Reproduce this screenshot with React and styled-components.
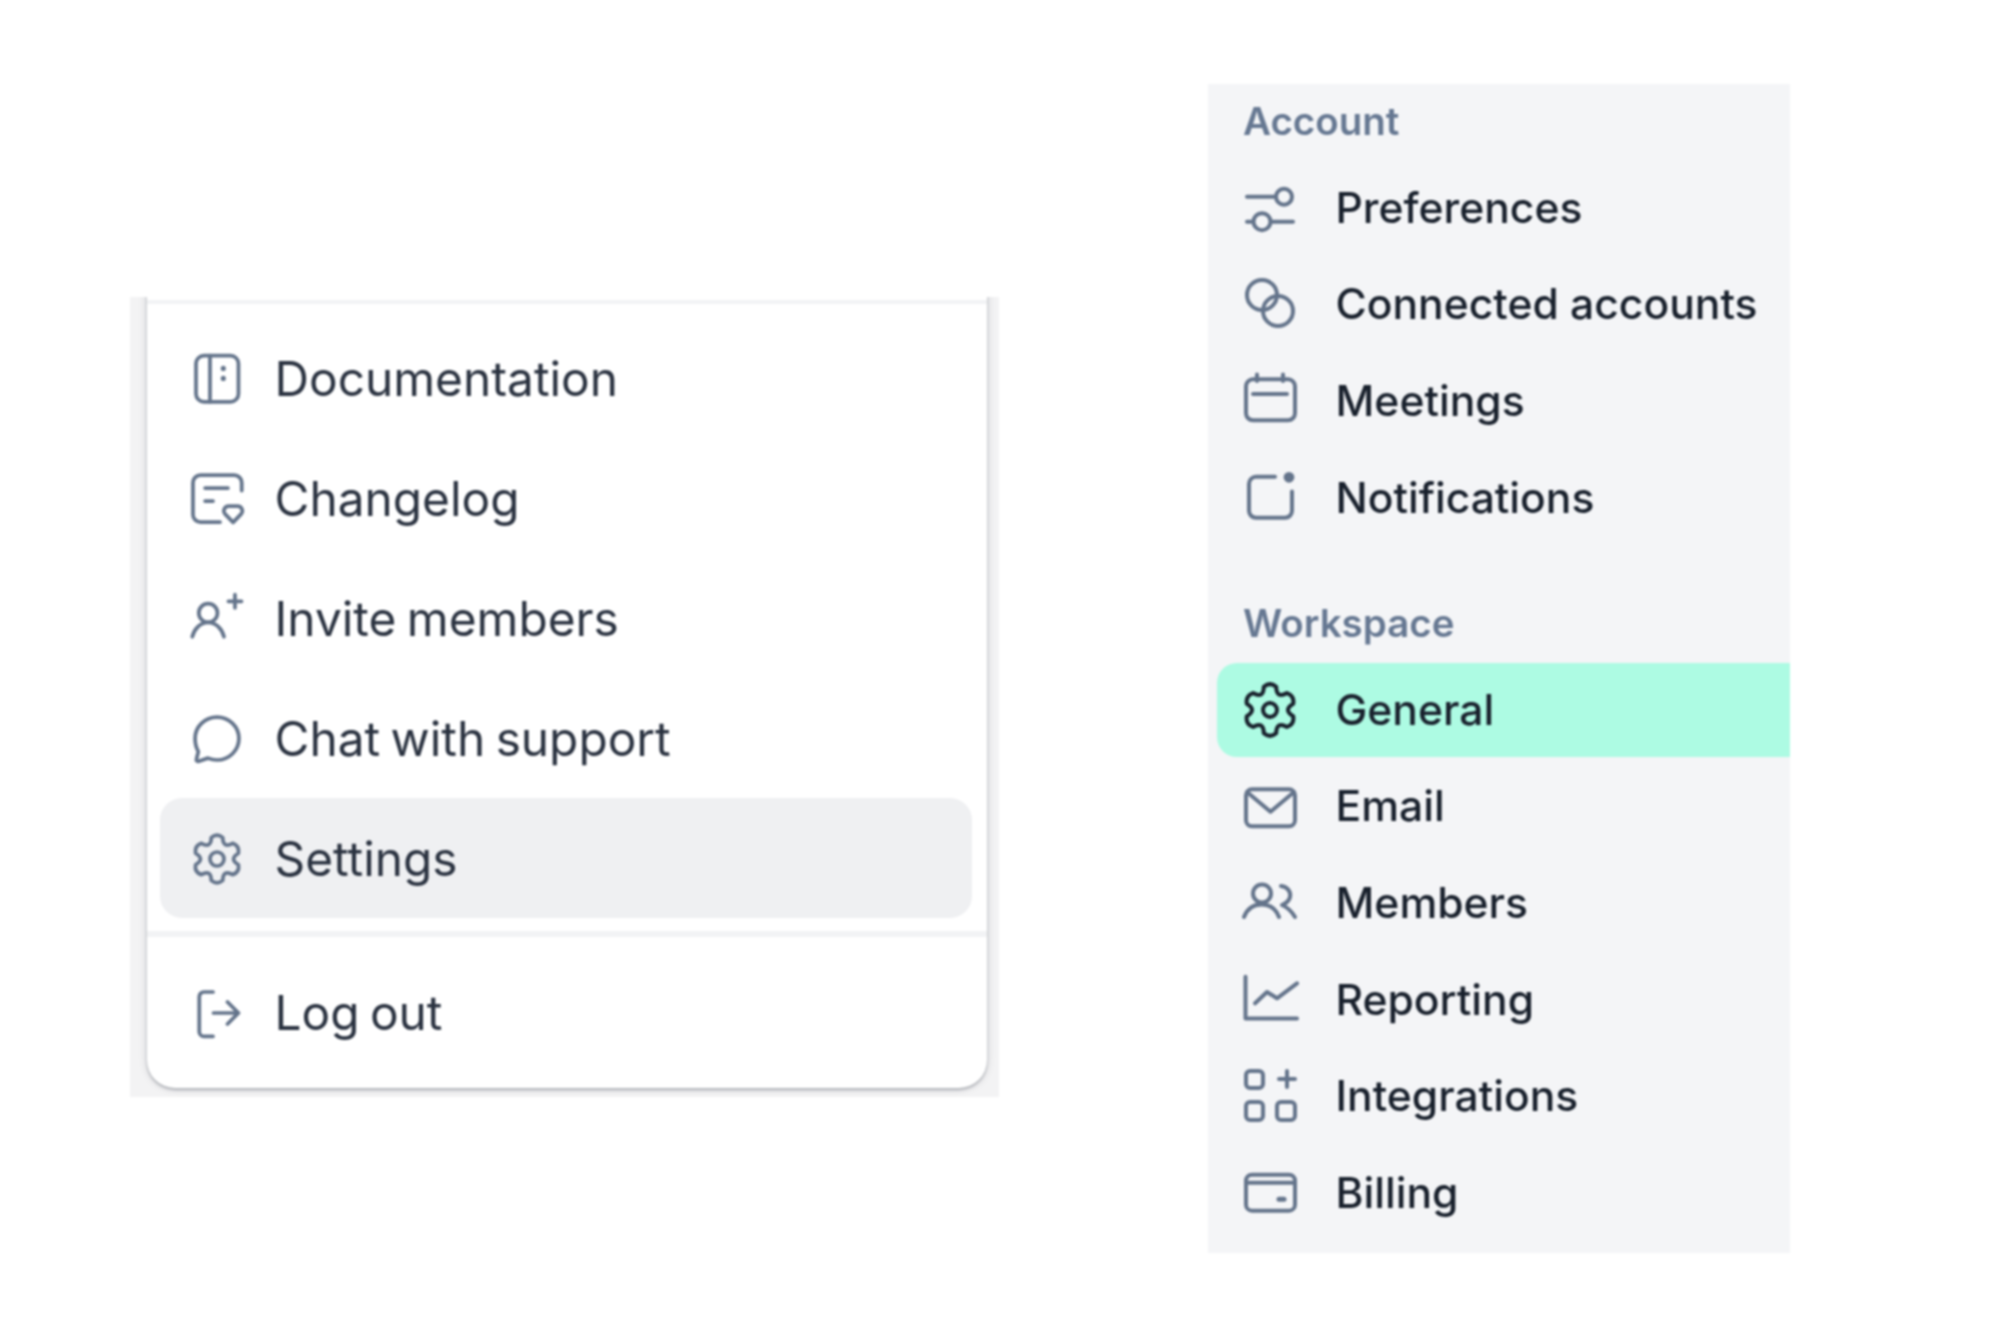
import React from "react";
import styled, { createGlobalStyle } from "styled-components";

const GlobalStyle = createGlobalStyle`
  html, body {
    margin: 0;
    padding: 0;
    background: #ffffff;
  }
`;

// six lobed gear used by both lists, drawn around the middle of its viewBox
const gearPath = (c, radius) => {
  const pt = (r, deg) => {
    const a = (deg * Math.PI) / 180;
    return `${(c + r * Math.cos(a)).toFixed(2)} ${(c + r * Math.sin(a)).toFixed(2)}`;
  };
  const shoulder = radius * 0.98;
  let d = `M${pt(shoulder, -90 - 15)}`;
  for (let k = 0; k < 6; k++) {
    const a = -90 + 60 * k;
    d += ` Q${pt(radius * 1.16, a)} ${pt(shoulder, a + 15)}`;
    d += ` Q${pt(radius * 0.52, a + 30)} ${pt(shoulder, a + 45)}`;
  }
  return d + "Z";
};

// 24 unit icons of the dropdown menu
const menuIcons = {
  book: (
    <>
      <rect x="3" y="2" width="18.2" height="19.8" rx="3.4" />
      <path d="M9 2v19.8" />
      <path d="M14.7 7.4v.1M14.7 11.7v.1" strokeWidth="2.2" />
    </>
  ),
  changelog: (
    <>
      <path d="M22.6 8.400V5a3.200 3.200 0 0 0-3.200-3.200H4.900A3.200 3.200 0 0 0 1.700 5v13.700a3.200 3.200 0 0 0 3.200 3.200h8.400" />
      <path d="M6.900 7.300h9.800M6.900 12.900h3.400" />
      <path d="M18.900 22l-3.400-3.500c-1.200-1.300-.3-3.400 1.500-3.400h3.800c1.800 0 2.700 2.100 1.500 3.400z" />
    </>
  ),
  invite: (
    <>
      <circle cx="8.200" cy="9.400" r="4" />
      <path d="M1.400 19.600c.8-3.400 3.500-6.200 6.800-6.200s6 2.800 6.800 6.200" />
      <path d="M19.700 1.600v5.600M16.900 4.400h5.600" />
    </>
  ),
  chat: (
    <path d="M12 2.600c5.200 0 9.400 4.100 9.400 9.200S17.200 21 12 21c-1.400 0-2.700-.3-3.900-.8l-3.900 1.300c-.6.2-1.200-.3-1-.9l.8-3.200C3.200 16 2.600 14 2.600 11.800 2.600 6.700 6.800 2.600 12 2.600z" />
  ),
  gear: (
    <>
      <path d={gearPath(12, 9.7)} />
      <circle cx="12" cy="12" r="3" />
    </>
  ),
  logout: (
    <>
      <path d="M10.300 3H6.400A2 2 0 0 0 4.400 5V20a2 2 0 0 0 2 2h3.900" />
      <path d="M10.500 12H21.200M16.500 7.300l4.700 4.700-4.700 4.700" />
    </>
  ),
};

// 64 unit icons of the settings sidebar
const navIcons = {
  sliders: (
    <>
      <path d="M9 20.700h28M33 45.700h22M9 45.700h6" />
      <circle cx="46" cy="20.700" r="8" />
      <circle cx="24" cy="45.700" r="8.500" />
    </>
  ),
  connected: (
    <>
      <circle cx="24" cy="22" r="15" />
      <circle cx="40" cy="38" r="15" />
    </>
  ),
  calendar: (
    <>
      <rect x="8" y="10.300" width="49" height="41" rx="7" />
      <path d="M19 5.500V12M45 5.500V12M15 25h34" />
    </>
  ),
  notify: (
    <>
      <path d="M37 10.800H18a7 7 0 0 0-7 7v27a7 7 0 0 0 7 7h29a7 7 0 0 0 7-7V25.400" />
      <circle cx="51" cy="11.300" r="3.400" fill="#64748b" />
    </>
  ),
  gear: (
    <>
      <path d={gearPath(32, 24.500)} />
      <circle cx="32" cy="32" r="7" />
    </>
  ),
  mail: (
    <>
      <rect x="8" y="14.300" width="49" height="37" rx="6" />
      <path d="M9 17l23.500 19.700L56 17" />
    </>
  ),
  members: (
    <>
      <circle cx="24" cy="22.500" r="9" />
      <path d="M6 46C9 38 15 33.500 23.500 33.500S38 38 41 46" />
      <path d="M43 15C50 16 53 21 52 26C51 31 46 33 44 34C49 36 54 41 57 46" />
    </>
  ),
  chart: (
    <>
      <path d="M7.500 8.700V50.500H59" />
      <path d="M17.100 35.300L29 24l10 6.300 20-15" />
    </>
  ),
  grid: (
    <>
      <rect x="8" y="6" width="17" height="17" rx="4" />
      <rect x="8" y="37" width="17" height="18" rx="4" />
      <rect x="39" y="37" width="18" height="18" rx="4" />
      <path d="M49 6v16M41 14h16" />
    </>
  ),
  wallet: (
    <>
      <rect x="8" y="12.700" width="49" height="36" rx="6" />
      <path d="M8 20.700h49" />
      <path d="M41 37.300h5" strokeWidth="5" />
    </>
  ),
};

const menuItems = [
  { icon: "book", label: "Documentation" },
  { icon: "changelog", label: "Changelog" },
  { icon: "invite", label: "Invite members" },
  { icon: "chat", label: "Chat with support" },
  { icon: "gear", label: "Settings", hovered: true },
];

const accountItems = [
  { icon: "sliders", label: "Preferences" },
  { icon: "connected", label: "Connected accounts" },
  { icon: "calendar", label: "Meetings" },
  { icon: "notify", label: "Notifications" },
];

const workspaceItems = [
  { icon: "gear", label: "General", active: true },
  { icon: "mail", label: "Email" },
  { icon: "members", label: "Members" },
  { icon: "chart", label: "Reporting" },
  { icon: "grid", label: "Integrations" },
  { icon: "wallet", label: "Billing" },
];

const App = () => {
  return (
    <Page>
      <GlobalStyle />
      <MenuFrame>
        <Menu>
          <Divider $top />
          {menuItems.map((item) => (
            <MenuRow key={item.label} $hovered={item.hovered}>
              <MenuIcon viewBox="0 0 24 24">{menuIcons[item.icon]}</MenuIcon>
              {item.label}
            </MenuRow>
          ))}
          <Divider />
          <MenuRow>
            <MenuIcon viewBox="0 0 24 24">{menuIcons.logout}</MenuIcon>
            Log out
          </MenuRow>
        </Menu>
      </MenuFrame>

      <Sidebar>
        <SectionTitle>Account</SectionTitle>
        <NavList>
          {accountItems.map((item) => (
            <NavRow key={item.label}>
              <NavIcon viewBox="0 0 64 64">{navIcons[item.icon]}</NavIcon>
              {item.label}
            </NavRow>
          ))}
        </NavList>
        <SectionTitle $second>Workspace</SectionTitle>
        <NavList>
          {workspaceItems.map((item) => (
            <NavRow key={item.label} $active={item.active}>
              <NavIcon viewBox="0 0 64 64" $active={item.active}>{navIcons[item.icon]}</NavIcon>
              {item.label}
            </NavRow>
          ))}
        </NavList>
      </Sidebar>
    </Page>
  );
};

const Page = styled.div`
  display: flex;
  align-items: flex-start;
  width: 2000px;
  height: 1333px;
  padding-left: 130px;
  box-sizing: border-box;
  background: #ffffff;
  font-family: Inter, "Liberation Sans", sans-serif;
  filter: blur(1px);
`;

const MenuFrame = styled.div`
  flex: none;
  width: 869px;
  height: 800px;
  margin-top: 297px;
  padding: 0 12px 0 17px;
  box-sizing: border-box;
  overflow: hidden;
  background: #ffffff;
`;

/* runs above the frame so the shadow is cut off square at the top */
const Menu = styled.div`
  height: 811px;
  margin-top: -20px;
  padding: 23px 15px 0 13px;
  box-sizing: border-box;
  background: #ffffff;
  border-radius: 0 0 28px 28px;
  box-shadow:
    0 0 0 30px rgba(16, 24, 40, 0.05),
    0 0 10px rgba(16, 24, 40, 0.14),
    0 2px 3px rgba(16, 24, 40, 0.26);
`;

const MenuRow = styled.div`
  display: flex;
  align-items: center;
  gap: 29.5px;
  height: 120px;
  padding-top: 1px;
  padding-left: 29px;
  box-sizing: border-box;
  border-radius: 22px;
  background: ${(p) => (p.$hovered ? "#eff0f2" : "transparent")};
  color: #2a3240;
  font-size: 47.8px;
  word-spacing: -3px;
`;

const MenuIcon = styled.svg`
  flex: none;
  width: 56px;
  height: 56px;
  overflow: visible;
  fill: none;
  stroke: #64748b;
  stroke-width: 1.6;
  stroke-linecap: round;
  stroke-linejoin: round;
`;

const Divider = styled.div`
  height: ${(p) => (p.$top ? "4px" : "6px")};
  margin: ${(p) => (p.$top ? "0 -15px 14px -13px" : "13px -15px 15px -13px")};
  background: #f2f3f5;
`;

const Sidebar = styled.div`
  flex: none;
  width: 582px;
  height: 1169px;
  margin-top: 84px;
  margin-left: 209px;
  padding: 17px 0 0 9px;
  box-sizing: border-box;
  background: #f4f5f7;
`;

const SectionTitle = styled.div`
  height: 40px;
  line-height: 40px;
  margin-top: ${(p) => (p.$second ? "58px" : "0")};
  margin-bottom: 20px;
  padding-left: 26px;
  color: #667892;
  font-size: 38.5px;
  font-weight: 600;
`;

const NavList = styled.div`
  display: flex;
  flex-direction: column;
  gap: 2.7px;
`;

const NavRow = styled.div`
  display: flex;
  align-items: center;
  gap: 34px;
  height: 94px;
  padding: 0 0 2px 20.5px;
  box-sizing: border-box;
  border-radius: 20px 0 0 20px;
  background: ${(p) => (p.$active ? "#adfbe3" : "transparent")};
  color: #18202c;
  font-size: 42.6px;
  font-weight: 500;
  white-space: nowrap;
`;

const NavIcon = styled.svg`
  flex: none;
  width: 64px;
  height: 64px;
  margin-top: 2px;
  overflow: visible;
  fill: none;
  stroke: ${(p) => (p.$active ? "#18202c" : "#64748b")};
  stroke-width: 4;
  stroke-linecap: round;
  stroke-linejoin: round;
`;

export default App;
